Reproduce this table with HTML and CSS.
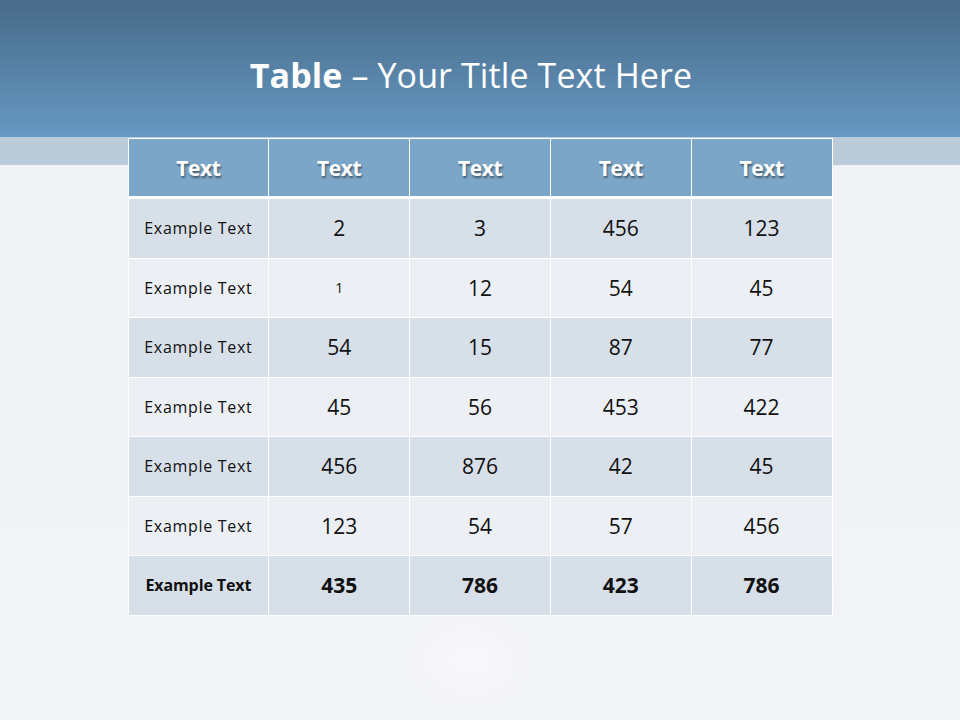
FILE: index.html
```html
<!DOCTYPE html>
<html lang="en">
<head>
<meta charset="utf-8">
<title>Table</title>
<link rel="stylesheet" href="styles.css">
</head>
<body>
<div class="slide">
  <header class="title-bar">
    <h1 class="title"><b>Table</b> – Your Title Text Here</h1>
  </header>
  <table class="data">
    <thead>
      <tr><th>Text</th><th>Text</th><th>Text</th><th>Text</th><th>Text</th></tr>
    </thead>
    <tbody>
      <tr class="odd"><td class="lbl">Example Text</td><td>2</td><td>3</td><td>456</td><td>123</td></tr>
      <tr class="even"><td class="lbl">Example Text</td><td class="small">1</td><td>12</td><td>54</td><td>45</td></tr>
      <tr class="odd"><td class="lbl">Example Text</td><td>54</td><td>15</td><td>87</td><td>77</td></tr>
      <tr class="even"><td class="lbl">Example Text</td><td>45</td><td>56</td><td>453</td><td>422</td></tr>
      <tr class="odd"><td class="lbl">Example Text</td><td>456</td><td>876</td><td>42</td><td>45</td></tr>
      <tr class="even"><td class="lbl">Example Text</td><td>123</td><td>54</td><td>57</td><td>456</td></tr>
      <tr class="odd total"><td class="lbl">Example Text</td><td>435</td><td>786</td><td>423</td><td>786</td></tr>
    </tbody>
  </table>
</div>
</body>
</html>
```
FILE: styles.css
```css
html, body {
  margin: 0;
  padding: 0;
}
body {
  font-family: "Open Sans", "Liberation Sans", sans-serif;
}
.slide {
  width: 960px;
  height: 720px;
  overflow: hidden;
  background:
    radial-gradient(ellipse 90px 70px at 470px 660px, rgba(255,255,255,0.45), rgba(255,255,255,0) 70%),
    linear-gradient(to bottom, #476b88 0, #6698c2 137px, #bccbda 137px, #bccbda 165px, #f0f2f5 165px, #f3f4f7 720px);
  display: flex;
  flex-direction: column;
  align-items: center;
}
.title-bar {
  height: 138px;
  width: 100%;
  display: flex;
  justify-content: center;
  align-items: flex-start;
}
.title {
  margin: 52px 18px 0 0;
  font-family: "Open Sans", sans-serif;
  font-weight: 400;
  font-size: 34px;
  letter-spacing: 0.1px;
  line-height: 46px;
  color: #ffffff;
}
.title b {
  font-weight: 700;
}
.data {
  width: 705px;
  border-collapse: collapse;
  table-layout: fixed;
  border: 1px solid #ffffff;
}
.data th, .data td {
  border: 1px solid #ffffff;
  text-align: center;
  padding: 0;
}
.data th {
  height: 57px;
  background: #7ca6c8;
  color: #ffffff;
  font-family: "Open Sans", sans-serif;
  font-weight: 700;
  font-size: 21px;
  letter-spacing: -0.4px;
  text-shadow: 1px 2px 2px rgba(0, 0, 0, 0.45);
  border-bottom: 3px solid #ffffff;
}
.data td {
  height: 58.5px;
  font-size: 21px;
  color: #111111;
  letter-spacing: 0;
}
.data td.lbl {
  font-size: 16px;
  letter-spacing: 0.7px;
}
.data td.small {
  font-size: 14px;
}
.odd td {
  background: #d7dfe9;
}
.even td {
  background: #ecf0f5;
}
.total td {
  font-weight: 700;
}
.total td.lbl {
  letter-spacing: -0.1px;
}
```
